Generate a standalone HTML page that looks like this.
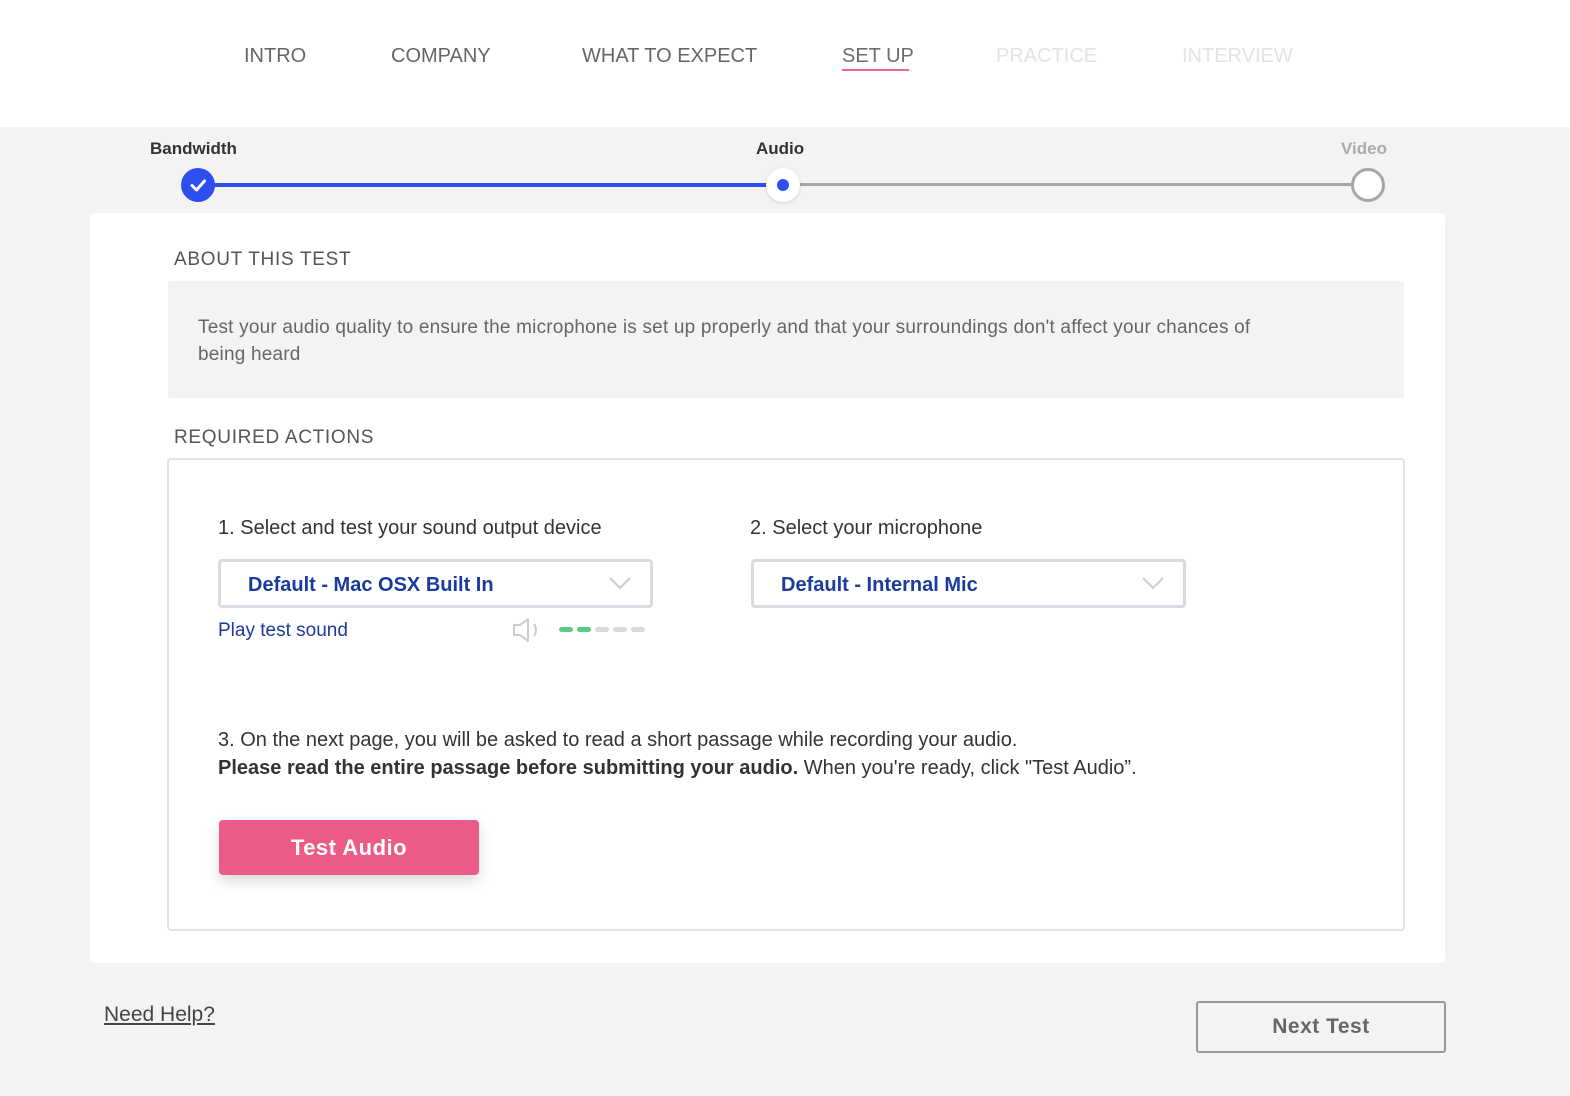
<!DOCTYPE html>
<html><head><meta charset="utf-8"><style>
*{box-sizing:border-box;margin:0;padding:0}
body{width:1570px;height:1096px;background:#f3f3f3;font-family:"Liberation Sans",sans-serif;position:relative;overflow:hidden;color:#333}
.nav{position:absolute;left:0;top:0;width:1570px;height:127px;background:#fff}
.nav span{position:absolute;top:45px;font-size:20px;color:#666}
.ab{position:absolute}
</style></head><body>
<div class="nav">
<span style="left:244px">INTRO</span>
<span style="left:391px">COMPANY</span>
<span style="left:582px">WHAT TO EXPECT</span>
<span style="left:842px;color:#6d6d6d">SET UP</span>
<div class="ab" style="left:842px;top:69px;width:67px;height:2px;background:#f06292"></div>
<span style="left:996px;color:#e3e3e3">PRACTICE</span>
<span style="left:1182px;color:#e3e3e3">INTERVIEW</span>
</div>
<div class="ab" style="left:150px;top:139px;font-size:17px;font-weight:bold;color:#333">Bandwidth</div>
<div class="ab" style="left:756px;top:139px;font-size:17px;font-weight:bold;color:#333">Audio</div>
<div class="ab" style="left:1341px;top:139px;font-size:17px;font-weight:bold;color:#aaa">Video</div>
<div class="ab" style="left:198px;top:183px;width:585px;height:4px;background:#2e4ef0"></div>
<div class="ab" style="left:783px;top:183px;width:585px;height:3px;background:#a6a6a6"></div>
<div class="ab" style="left:181px;top:168px;width:34px;height:34px;border-radius:50%;background:#2e4ef0"></div>
<svg class="ab" style="left:181px;top:168px" width="34" height="34"><path d="M11 17.5l4.5 4.5 8-9" fill="none" stroke="#fff" stroke-width="3" stroke-linecap="round" stroke-linejoin="round"/></svg>
<div class="ab" style="left:766px;top:168px;width:34px;height:34px;border-radius:50%;background:#fff;box-shadow:0 1px 3px rgba(0,0,0,.15)"></div>
<div class="ab" style="left:777px;top:179px;width:12px;height:12px;border-radius:50%;background:#2e4ef0"></div>
<div class="ab" style="left:1351px;top:168px;width:34px;height:34px;border-radius:50%;background:#fff;border:3px solid #a6a6a6"></div>

<div class="ab" style="left:90px;top:213px;width:1355px;height:750px;background:#fff;border-radius:4px"></div>
<div class="ab" style="left:174px;top:249px;font-size:19px;letter-spacing:.7px;color:#555">ABOUT THIS TEST</div>
<div class="ab" style="left:168px;top:281px;width:1236px;height:117px;background:#f3f3f3;border-radius:3px;padding:33px 150px 0 30px;font-size:19px;line-height:27px;color:#666;letter-spacing:.2px">Test your audio quality to ensure the microphone is set up properly and that your surroundings don't affect your chances of being heard</div>
<div class="ab" style="left:174px;top:427px;font-size:19px;letter-spacing:.7px;color:#555">REQUIRED ACTIONS</div>
<div class="ab" style="left:167px;top:458px;width:1238px;height:473px;border:2px solid #e3e3e3;border-radius:4px"></div>
<div class="ab" style="left:218px;top:517px;font-size:20px;color:#333">1. Select and test your sound output device</div>
<div class="ab" style="left:750px;top:517px;font-size:20px;color:#333">2. Select your microphone</div>
<div class="ab" style="left:218px;top:559px;width:435px;height:49px;border:3px solid #d8dbe0;border-radius:4px;padding:12px 27px;font-size:20px;font-weight:bold;color:#1b3a9e">Default - Mac OSX Built In</div>
<svg class="ab" style="left:608px;top:575px" width="24" height="16"><path d="M2 3l10 10 10-10" fill="none" stroke="#ccc" stroke-width="2"/></svg>
<div class="ab" style="left:751px;top:559px;width:435px;height:49px;border:3px solid #d8dbe0;border-radius:4px;padding:12px 27px;font-size:20px;font-weight:bold;color:#1b3a9e">Default - Internal Mic</div>
<svg class="ab" style="left:1141px;top:575px" width="24" height="16"><path d="M2 3l10 10 10-10" fill="none" stroke="#ccc" stroke-width="2"/></svg>
<div class="ab" style="left:218px;top:620px;font-size:19px;color:#1b3a9e">Play test sound</div>
<svg class="ab" style="left:512px;top:616px" width="30" height="28"><path d="M2 9h6l8-6v22l-8-6H2z" fill="none" stroke="#ccc" stroke-width="2" stroke-linejoin="round"/><path d="M22 8q4 6 0 12" fill="none" stroke="#ccc" stroke-width="2"/></svg>
<div class="ab" style="left:559px;top:627px;width:14px;height:5px;border-radius:3px;background:#5ec98c"></div>
<div class="ab" style="left:577px;top:627px;width:14px;height:5px;border-radius:3px;background:#5ec98c"></div>
<div class="ab" style="left:595px;top:627px;width:14px;height:5px;border-radius:3px;background:#d8dbe0"></div>
<div class="ab" style="left:613px;top:627px;width:14px;height:5px;border-radius:3px;background:#d8dbe0"></div>
<div class="ab" style="left:631px;top:627px;width:14px;height:5px;border-radius:3px;background:#d8dbe0"></div>
<div class="ab" style="left:218px;top:726px;font-size:20px;line-height:28px;color:#333">3. On the next page, you will be asked to read a short passage while recording your audio.<br><b>Please read the entire passage before submitting your audio.</b> When you're ready, click "Test Audio”.</div>
<div class="ab" style="left:219px;top:820px;width:260px;height:55px;background:#ec5a88;border-radius:4px;box-shadow:0 6px 14px rgba(0,0,0,.15);color:#fff;font-size:22px;font-weight:bold;text-align:center;line-height:55px;letter-spacing:.5px">Test Audio</div>
<div class="ab" style="left:104px;top:1003px;font-size:21px;color:#444;text-decoration:underline">Need Help?</div>
<div class="ab" style="left:1196px;top:1001px;width:250px;height:52px;border:2px solid #999;border-radius:3px;text-align:center;line-height:48px;font-size:21px;font-weight:bold;color:#666;letter-spacing:.5px">Next Test</div>
</body></html>
